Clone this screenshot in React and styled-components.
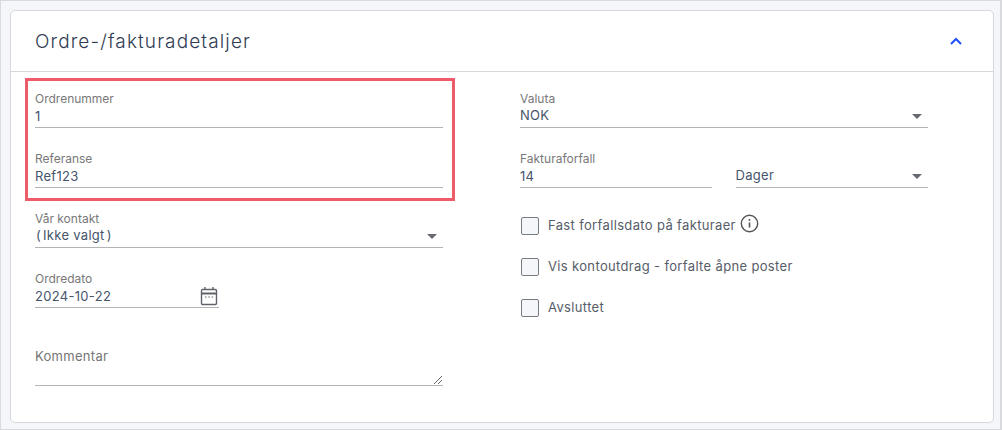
import styled, { createGlobalStyle } from "styled-components";

const GlobalStyle = createGlobalStyle`
  html, body {
    margin: 0;
    padding: 0;
  }
  body {
    font-family: "Inter", "Noto Sans", sans-serif;
    background: #f4f6fa;
  }
  * {
    box-sizing: border-box;
  }
`;

const Frame = styled.div`
  width: 1002px;
  height: 430px;
  padding: 9px 6px 0 9px;
  background: #f4f6fa;
  border: 1px solid #d9dadd;
  border-right-width: 2px;
`;

const Card = styled.section`
  position: relative;
  height: 413px;
  background: #ffffff;
  border: 1px solid #d6d8dc;
  border-radius: 5px;
`;

const CardHeader = styled.header`
  display: flex;
  align-items: center;
  justify-content: space-between;
  height: 61px;
  padding: 0 30px 0 24px;
  border-bottom: 1px solid #d6d8dc;
`;

const CardTitle = styled.h2`
  margin: 0;
  font-size: 19px;
  font-weight: 300;
  letter-spacing: 1.12px;
  color: #2f3b52;
`;

const Collapse = styled.button`
  display: flex;
  padding: 0;
  border: none;
  background: none;
`;

const CardBody = styled.div`
  display: grid;
  grid-template-columns: 408px 408px;
  column-gap: 77px;
  padding: 19px 0 0 24px;
`;

const Column = styled.div`
  display: flex;
  flex-direction: column;
`;

const Field = styled.div`
  display: flex;
  flex-direction: column;
  width: ${(p) => p.$width || "100%"};
  height: 60px;
`;

const Label = styled.label`
  height: 15px;
  padding-top: 1px;
  font-size: 12px;
  line-height: 14px;
  color: #787878;
`;

const Value = styled.div`
  display: flex;
  align-items: center;
  justify-content: space-between;
  height: 22px;
  padding-bottom: ${(p) => (p.$select ? "3px" : "2px")};
  border-bottom: 1px solid #b3b3b3;
  font-size: 13px;
  letter-spacing: 0.3px;
  color: #46546c;
`;

const Paren = styled.span`
  margin: ${(p) => (p.$close ? "0 0 0 2px" : "0 2px 0 1px")};
`;

const Arrow = styled.span`
  width: 0;
  height: 0;
  margin: 3px 6px 0 0;
  border-left: 5px solid transparent;
  border-right: 5px solid transparent;
  border-top: 5px solid #666a70;
`;

const FieldRow = styled.div`
  display: flex;
  gap: 24px;
`;

const CommentField = styled.div`
  position: relative;
  display: flex;
  align-items: flex-start;
  height: 51px;
  margin-top: 4px;
  padding-top: 13px;
  border-bottom: 1px solid #b3b3b3;
  font-size: 13px;
  letter-spacing: 0.3px;
  color: #757575;
`;

const ResizeGrip = styled.svg`
  position: absolute;
  right: 0;
  bottom: 0;
`;

const Checks = styled.div`
  display: flex;
  flex-direction: column;
  gap: 23px;
  padding: 6px 0 0 1px;
`;

const CheckRow = styled.div`
  display: flex;
  align-items: center;
  gap: 9px;
  height: 18px;
  padding-bottom: 2px;
  font-size: 13px;
  letter-spacing: 0.35px;
  color: #565d69;
`;

const CheckBox = styled.span`
  flex: none;
  align-self: flex-start;
  width: 18px;
  height: 18px;
  background: #f4f6fa;
  border: 1px solid #777b82;
  border-radius: 2px;
`;

const InfoIcon = styled.svg`
  margin: -3px 0 0 -5px;
`;

const Highlight = styled.div`
  position: absolute;
  left: 14px;
  top: 67px;
  width: 430px;
  height: 123px;
  border: 3px solid #ee5b6b;
  pointer-events: none;
`;

const CalendarIcon = () => (
  <svg width="18" height="20" viewBox="0 0 18 20" fill="none" style={{ marginRight: 1 }}>
    <rect x="1.5" y="3.5" width="15" height="15" rx="1.2" stroke="#5f6368" strokeWidth="1.4" />
    <path d="M1.5 7.5h15" stroke="#5f6368" strokeWidth="2" />
    <path d="M5 1v3M13 1v3" stroke="#5f6368" strokeWidth="1.4" />
    <path d="M5 11h1.5M8.3 11h1.5M11.6 11h1.5" stroke="#5f6368" strokeWidth="1.2" />
  </svg>
);

const App = () => {
  return (
    <>
      <GlobalStyle />
      <Frame>
        <Card>
          <CardHeader>
            <CardTitle>Ordre-/fakturadetaljer</CardTitle>
            <Collapse aria-label="Skjul">
              <svg width="14" height="10" viewBox="0 0 14 10" fill="none">
                <path d="M2 8l5-5 5 5" stroke="#1f4fff" strokeWidth="2" />
              </svg>
            </Collapse>
          </CardHeader>
          <CardBody>
            <Column>
              <Field>
                <Label>Ordrenummer</Label>
                <Value>1</Value>
              </Field>
              <Field>
                <Label>Referanse</Label>
                <Value>Ref123</Value>
              </Field>
              <Field>
                <Label>Vår kontakt</Label>
                <Value $select>
                  <span>
                    <Paren>(</Paren>Ikke valgt<Paren $close>)</Paren>
                  </span>
                  <Arrow />
                </Value>
              </Field>
              <Field $width="184px">
                <Label>Ordredato</Label>
                <Value>
                  2024-10-22
                  <CalendarIcon />
                </Value>
              </Field>
              <CommentField>
                Kommentar
                <ResizeGrip width="10" height="10" viewBox="0 0 10 10" fill="none">
                  <path d="M1 9l8-8M5 9l4-4" stroke="#666" strokeWidth="1" />
                </ResizeGrip>
              </CommentField>
            </Column>
            <Column>
              <Field>
                <Label>Valuta</Label>
                <Value $select>
                  NOK
                  <Arrow />
                </Value>
              </Field>
              <FieldRow>
                <Field $width="192px">
                  <Label>Fakturaforfall</Label>
                  <Value>14</Value>
                </Field>
                <Field $width="193px">
                  <Label />
                  <Value $select>
                    Dager
                    <Arrow />
                  </Value>
                </Field>
              </FieldRow>
              <Checks>
                <CheckRow>
                  <CheckBox />
                  Fast forfallsdato på fakturaer
                  <InfoIcon width="19" height="19" viewBox="0 0 19 19" fill="none">
                    <circle cx="9.5" cy="9.5" r="8.2" stroke="#555" strokeWidth="1.4" />
                    <path d="M9.5 8.5v5" stroke="#555" strokeWidth="1.6" />
                    <path d="M9.5 5v1.8" stroke="#555" strokeWidth="1.6" />
                  </InfoIcon>
                </CheckRow>
                <CheckRow>
                  <CheckBox />
                  Vis kontoutdrag - forfalte åpne poster
                </CheckRow>
                <CheckRow>
                  <CheckBox />
                  Avsluttet
                </CheckRow>
              </Checks>
            </Column>
          </CardBody>
          <Highlight />
        </Card>
      </Frame>
    </>
  );
};

export default App;
